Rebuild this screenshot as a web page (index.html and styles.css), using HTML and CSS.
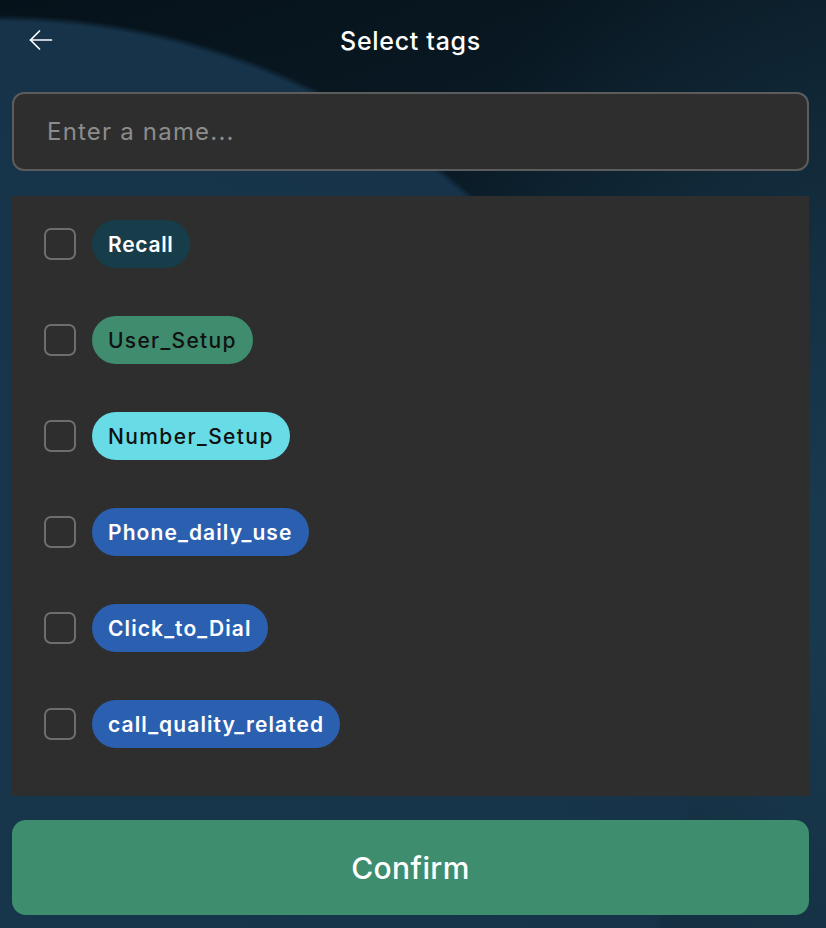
FILE: index.html
```html
<!DOCTYPE html>
<html lang="en">
<head>
    <meta charset="UTF-8">
    <meta name="viewport" content="width=device-width, initial-scale=1.0">
    <title>Select tags</title>
    <link rel="stylesheet" href="styles.css">
</head>
<body>
    <div class="screen">
        <header class="top-bar">
            <button class="back-btn" aria-label="Back">
                <svg width="24" height="24" viewBox="0 0 24 24" fill="none" stroke="#fff" stroke-width="1.7" stroke-linecap="round" stroke-linejoin="round">
                    <path d="M22.5 12H1.5"/>
                    <path d="M10.5 3l-9 9 9 9"/>
                </svg>
            </button>
            <h1>Select tags</h1>
        </header>

        <input class="name-input" type="text" placeholder="Enter a name...">

        <ul class="tag-list">
            <li class="tag-row"><span class="check"></span><span class="pill pill-recall">Recall</span></li>
            <li class="tag-row"><span class="check"></span><span class="pill pill-green">User_Setup</span></li>
            <li class="tag-row"><span class="check"></span><span class="pill pill-cyan">Number_Setup</span></li>
            <li class="tag-row"><span class="check"></span><span class="pill pill-blue">Phone_daily_use</span></li>
            <li class="tag-row"><span class="check"></span><span class="pill pill-blue">Click_to_Dial</span></li>
            <li class="tag-row"><span class="check"></span><span class="pill pill-blue">call_quality_related</span></li>
        </ul>

        <button class="confirm-btn">Confirm</button>
    </div>
</body>
</html>
```

FILE: styles.css
```css
html, body {
    margin: 0;
    height: 100%;
}

body {
    font-family: 'Inter', 'Lato', sans-serif;
    color: #fff;
    background:
        radial-gradient(ellipse 700px 685px at 0 700px, #17364b 0%, #16334a 99%, rgba(22, 51, 74, 0) 100%),
        radial-gradient(ellipse 700px 900px at 900px 560px, #1b3d53 0%, rgba(27, 61, 83, 0) 80%),
        linear-gradient(160deg, #06121a 0%, #0b1d29 40%, #12293a 100%);
    overflow: hidden;
}

.screen {
    display: flex;
    flex-direction: column;
    padding: 0 17px 0 12px;
    height: 100%;
    box-sizing: border-box;
}

.top-bar {
    position: relative;
    height: 82px;
    display: flex;
    align-items: center;
    justify-content: center;
}

.top-bar h1 {
    margin: 0;
    font-size: 25px;
    font-weight: 500;
    letter-spacing: 0.7px;
}

.back-btn {
    position: absolute;
    left: 17px;
    top: 28px;
    background: none;
    border: 0;
    padding: 0;
    cursor: pointer;
}

.name-input {
    margin-top: 10px;
    height: 79px;
    box-sizing: border-box;
    background: #2e2e2e;
    border: 2px solid #5c5c5c;
    border-radius: 12px;
    padding: 0 33px;
    font-family: inherit;
    font-size: 24px;
    letter-spacing: 1.2px;
    color: #fff;
    outline: none;
}

.name-input::placeholder {
    color: #8c8c8c;
}

.tag-list {
    list-style: none;
    margin: 25px 0 0;
    padding: 24px 32px 0;
    background: #2e2e2e;
    height: 600px;
    box-sizing: border-box;
}

.tag-row {
    display: flex;
    align-items: center;
    gap: 16px;
    height: 48px;
    margin: 0 0 48px;
}

.check {
    width: 32px;
    height: 32px;
    box-sizing: border-box;
    border: 2px solid #6d6d6d;
    border-radius: 7px;
    flex-shrink: 0;
}

.pill {
    display: inline-flex;
    align-items: center;
    height: 48px;
    padding: 0 16px;
    border-radius: 24px;
    font-size: 21px;
    font-weight: 600;
    letter-spacing: 1.1px;
}

.pill-recall {
    background: #173d4b;
    color: #fff;
    letter-spacing: 0.7px;
}

.pill-green {
    background: #3f8d6e;
    color: #111;
    font-weight: 500;
    letter-spacing: 1.3px;
}

.pill-cyan {
    background: #67dbe6;
    color: #111;
    font-weight: 500;
    letter-spacing: 1.4px;
}

.pill-blue {
    background: #2b5fb0;
    color: #fff;
}

.confirm-btn {
    margin-top: 24px;
    height: 95px;
    border: 0;
    border-radius: 14px;
    background: #3f8d6f;
    color: #fff;
    font-family: inherit;
    font-size: 30px;
    font-weight: 500;
    letter-spacing: 0.4px;
    cursor: pointer;
}
```
